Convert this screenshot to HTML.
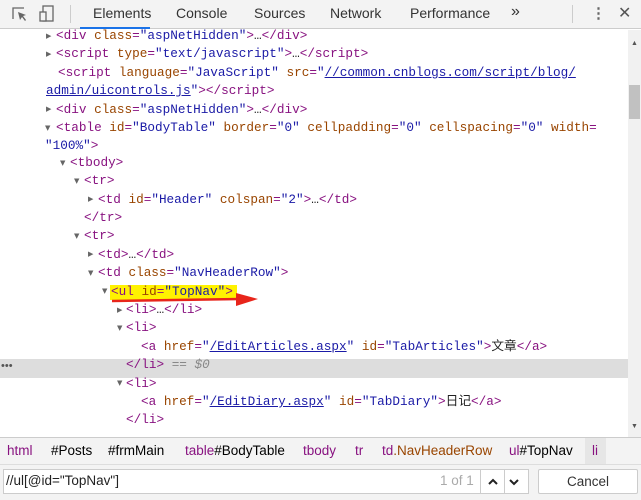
<!DOCTYPE html>
<html><head><meta charset="utf-8"><style>
*{margin:0;padding:0;box-sizing:border-box}
body{width:641px;height:500px;overflow:hidden;background:#fff;font-family:"Liberation Sans","Noto Sans CJK SC",sans-serif;position:relative}
.tb{position:absolute;left:0;top:0;width:641px;height:29px;background:#f3f3f3;border-bottom:1px solid #ccc}
.tab{position:absolute;top:5px;font-size:14px;color:#333}
.ln{position:absolute;font-family:"Liberation Mono","Noto Sans CJK SC",monospace;font-size:12.7px;white-space:pre;height:18px;line-height:18px;color:#881280}
.n{color:#994500}.v{color:#1a1aa6}.u{color:#1a1aa6;text-decoration:underline}.t{color:#222}
.tri{position:absolute;font-size:7px;color:#666;font-family:"DejaVu Sans",sans-serif}
.bc{position:absolute;left:0;top:437px;width:641px;height:27px;background:#f3f3f3;border-top:1px solid #ccc;font-size:13.5px}
.bc span{position:absolute;top:5px}
</style></head><body>
<div class="tb">
<svg style="position:absolute;left:10px;top:5px" width="20" height="18"><path d="M3 14V3h11" fill="none" stroke="#666" stroke-width="1.3"/><path d="M8 7l8 3-3 1 3 4-1 1-3-4-2 3z" fill="#666"/></svg>
<svg style="position:absolute;left:38px;top:4px" width="20" height="20"><rect x="5" y="2" width="10" height="15" fill="none" stroke="#666" stroke-width="1.3"/><rect x="2" y="8" width="6" height="9" fill="#f3f3f3" stroke="#666" stroke-width="1.3"/></svg>
<div style="position:absolute;left:70px;top:5px;width:1px;height:18px;background:#ccc"></div>
<span class="tab" style="left:93px">Elements</span>
<div style="position:absolute;left:80px;top:27px;width:70px;height:2px;background:#1a73e8"></div>
<span class="tab" style="left:176px">Console</span>
<span class="tab" style="left:254px">Sources</span>
<span class="tab" style="left:330px">Network</span>
<span class="tab" style="left:410px">Performance</span>
<span class="tab" style="left:511px;font-size:16px;top:3px">»</span>
<div style="position:absolute;left:572px;top:5px;width:1px;height:18px;background:#ccc"></div>
<span class="tab" style="left:591px;font-weight:bold;color:#666;font-size:15px;top:4px">⋮</span>
<span class="tab" style="left:618px;font-size:16px;top:3px;color:#555">✕</span>
</div>
<div style="position:absolute;left:0;top:359px;width:628px;height:19px;background:#ddd"></div>
<span style="position:absolute;left:1px;top:360px;font-size:11px;color:#555">•••</span>
<div style="position:absolute;left:110px;top:285px;width:127px;height:15px;background:#fff200"></div>
<div style="position:absolute;left:628px;top:30px;width:13px;height:407px;background:#f1f1f1"></div>
<div style="position:absolute;left:629px;top:85px;width:11px;height:34px;background:#c1c1c1"></div>
<span style="position:absolute;left:631px;top:40px;font-size:7px;color:#555">▲</span>
<span style="position:absolute;left:631px;top:423px;font-size:7px;color:#555">▼</span>

<span class="tri" style="left:46px;top:32px">▶</span><div class="ln" style="left:56px;top:27px">&lt;div <span class="n">class</span>=<span class="v">"aspNetHidden"</span>&gt;<span class="t">…</span>&lt;/div&gt;</div>
<span class="tri" style="left:46px;top:50px">▶</span><div class="ln" style="left:56px;top:45.4px">&lt;script <span class="n">type</span>=<span class="v">"text/javascript"</span>&gt;<span class="t">…</span>&lt;/script&gt;</div>
<div class="ln" style="left:58px;top:63.8px">&lt;script <span class="n">language</span>=<span class="v">"JavaScript"</span> <span class="n">src</span>=<span class="v">"<span class="u">//common.cnblogs.com/script/blog/</span></span></div>
<div class="ln" style="left:46px;top:82.2px"><span class="v"><span class="u">admin/uicontrols.js</span>"</span>&gt;&lt;/script&gt;</div>
<span class="tri" style="left:46px;top:105px">▶</span><div class="ln" style="left:56px;top:100.6px">&lt;div <span class="n">class</span>=<span class="v">"aspNetHidden"</span>&gt;<span class="t">…</span>&lt;/div&gt;</div>
<span class="tri" style="left:45px;top:124px">▼</span><div class="ln" style="left:56px;top:119px">&lt;table <span class="n">id</span>=<span class="v">"BodyTable"</span> <span class="n">border</span>=<span class="v">"0"</span> <span class="n">cellpadding</span>=<span class="v">"0"</span> <span class="n">cellspacing</span>=<span class="v">"0"</span> <span class="n">width</span>=</div>
<div class="ln" style="left:45px;top:137.4px"><span class="v">"100%"</span>&gt;</div>
<span class="tri" style="left:60px;top:159px">▼</span><div class="ln" style="left:70px;top:153.8px">&lt;tbody&gt;</div>
<span class="tri" style="left:74px;top:177px">▼</span><div class="ln" style="left:84px;top:172.2px">&lt;tr&gt;</div>
<span class="tri" style="left:88px;top:195px">▶</span><div class="ln" style="left:98px;top:190.6px">&lt;td <span class="n">id</span>=<span class="v">"Header"</span> <span class="n">colspan</span>=<span class="v">"2"</span>&gt;<span class="t">…</span>&lt;/td&gt;</div>
<div class="ln" style="left:84px;top:209px">&lt;/tr&gt;</div>
<span class="tri" style="left:74px;top:232px">▼</span><div class="ln" style="left:84px;top:227.4px">&lt;tr&gt;</div>
<span class="tri" style="left:88px;top:250px">▶</span><div class="ln" style="left:98px;top:245.8px">&lt;td&gt;<span class="t">…</span>&lt;/td&gt;</div>
<span class="tri" style="left:88px;top:269px">▼</span><div class="ln" style="left:98px;top:264.2px">&lt;td <span class="n">class</span>=<span class="v">"NavHeaderRow"</span>&gt;</div>
<span class="tri" style="left:102px;top:287px">▼</span><div class="ln" style="left:111px;top:282.6px">&lt;ul <span class="n">id</span>=<span class="v">"TopNav"</span>&gt;</div>
<span class="tri" style="left:117px;top:306px">▶</span><div class="ln" style="left:126px;top:301px">&lt;li&gt;<span class="t">…</span>&lt;/li&gt;</div>
<span class="tri" style="left:117px;top:324px">▼</span><div class="ln" style="left:126px;top:319.4px">&lt;li&gt;</div>
<div class="ln" style="left:141px;top:337.8px">&lt;a <span class="n">href</span>=<span class="v">"<span class="u">/EditArticles.aspx</span>"</span> <span class="n">id</span>=<span class="v">"TabArticles"</span>&gt;<span class="t">文章</span>&lt;/a&gt;</div>
<div class="ln" style="left:126px;top:356.2px">&lt;/li&gt; <i style="color:#888">== $0</i></div>
<span class="tri" style="left:117px;top:379px">▼</span><div class="ln" style="left:126px;top:374.6px">&lt;li&gt;</div>
<div class="ln" style="left:141px;top:393px">&lt;a <span class="n">href</span>=<span class="v">"<span class="u">/EditDiary.aspx</span>"</span> <span class="n">id</span>=<span class="v">"TabDiary"</span>&gt;<span class="t">日记</span>&lt;/a&gt;</div>
<div class="ln" style="left:126px;top:411.4px">&lt;/li&gt;</div>

<svg style="position:absolute;left:0;top:0" width="641" height="500"><path d="M112 301 L240 299" stroke="#e8251b" stroke-width="2.5"/><path d="M236 293 L258 299 L236 306z" fill="#e8251b"/><path d="M358 494 L484 488" stroke="#e8251b" stroke-width="2.5"/><path d="M480 482 L502 488 L481 495z" fill="#e8251b"/></svg>

<div class="bc">
<span style="left:7px;color:#881280">html</span>
<span style="left:51px">#Posts</span>
<span style="left:108px">#frmMain</span>
<span style="left:185px"><b style="font-weight:normal;color:#881280">table</b>#BodyTable</span>
<span style="left:303px;color:#881280">tbody</span>
<span style="left:355px;color:#881280">tr</span>
<span style="left:382px"><b style="font-weight:normal;color:#881280">td</b><b style="font-weight:normal;color:#994500">.NavHeaderRow</b></span>
<span style="left:509px"><b style="font-weight:normal;color:#881280">ul</b>#TopNav</span>
<div style="position:absolute;left:585px;top:0;width:21px;height:26px;background:#e6e6e6"></div>
<span style="left:592px;color:#881280">li</span>
</div>
<div style="position:absolute;left:0;top:464px;width:641px;height:36px;background:#f3f3f3;border-top:1px solid #ddd"></div>
<div style="position:absolute;left:3px;top:469px;width:526px;height:25px;background:#fff;border:1px solid #ccc"></div>
<span style="position:absolute;left:6px;top:473px;font-size:13.5px;color:#222">//ul[@id="TopNav"]</span>
<span style="position:absolute;left:440px;top:473px;font-size:13.5px;color:#aaa">1 of 1</span>
<div style="position:absolute;left:480px;top:469px;width:1px;height:25px;background:#ccc"></div>
<div style="position:absolute;left:504px;top:469px;width:1px;height:25px;background:#ccc"></div>
<svg style="position:absolute;left:484px;top:474px" width="40" height="16"><path d="M5 10l4-4 4 4" fill="none" stroke="#222" stroke-width="2"/><path d="M26 6l4 4 4-4" fill="none" stroke="#222" stroke-width="2"/></svg>
<div style="position:absolute;left:538px;top:469px;width:100px;height:25px;background:#fff;border:1px solid #ccc;border-radius:2px;font-size:13.5px;text-align:center;line-height:23px;color:#333">Cancel</div>
</body></html>
